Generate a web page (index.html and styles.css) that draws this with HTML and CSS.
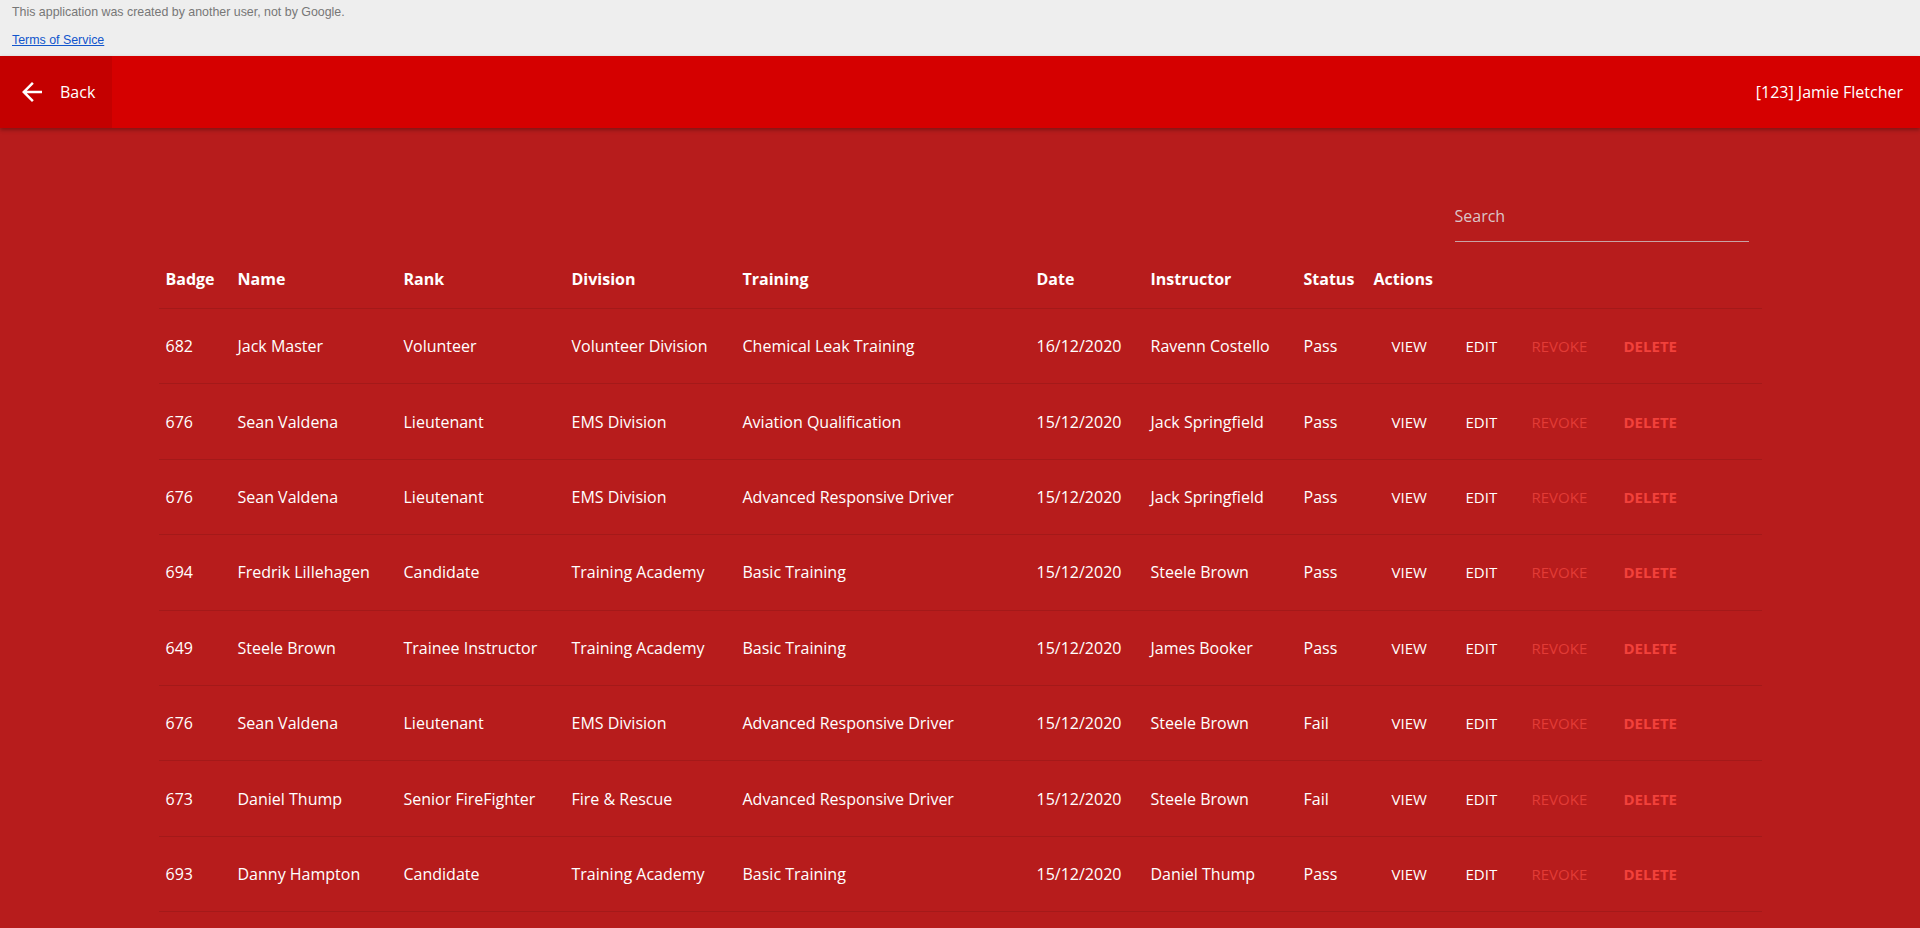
FILE: index.html
```html
<!DOCTYPE html>
<html lang="en">
<head>
<meta charset="utf-8">
<title>Training Records</title>
<link rel="stylesheet" href="styles.css">
</head>
<body>
<div class="gbar">
  <div class="gbar-line">This application was created by another user, not by Google.</div>
  <div class="gbar-line"><a class="gbar-link" href="#">Terms of Service</a></div>
</div>
<header class="toolbar">
  <a class="back" href="#">
    <svg class="back-icon" viewBox="0 0 24 24" width="30" height="30"><path fill="#fff" d="M20 11H7.83l5.590-5.59L12 4l-8 8 8 8 1.41-1.41L7.83 13H20v-2z"/></svg>
    <span class="back-text">Back</span>
  </a>
  <div class="spacer"></div>
  <div class="user">[123] Jamie Fletcher</div>
</header>
<main class="content">
  <div class="search-row">
    <label class="search-field"><input class="search-input" type="text" placeholder="Search"></label>
  </div>
  <div class="grid">
    <div class="row head">
      <div class="cell first">Badge</div><div class="cell">Name</div><div class="cell">Rank</div><div class="cell">Division</div><div class="cell">Training</div><div class="cell">Date</div><div class="cell">Instructor</div><div class="cell">Status</div><div class="cell">Actions</div>
    </div>
    <div class="row">
      <div class="cell first">682</div><div class="cell">Jack Master</div><div class="cell">Volunteer</div><div class="cell">Volunteer Division</div><div class="cell">Chemical Leak Training</div><div class="cell">16/12/2020</div><div class="cell">Ravenn Costello</div><div class="cell">Pass</div>
      <div class="cell actions"><span class="act act-view">VIEW</span><span class="act act-edit">EDIT</span><span class="act act-revoke">REVOKE</span><span class="act act-delete">DELETE</span></div>
    </div>
    <div class="row">
      <div class="cell first">676</div><div class="cell">Sean Valdena</div><div class="cell">Lieutenant</div><div class="cell">EMS Division</div><div class="cell">Aviation Qualification</div><div class="cell">15/12/2020</div><div class="cell">Jack Springfield</div><div class="cell">Pass</div>
      <div class="cell actions"><span class="act act-view">VIEW</span><span class="act act-edit">EDIT</span><span class="act act-revoke">REVOKE</span><span class="act act-delete">DELETE</span></div>
    </div>
    <div class="row">
      <div class="cell first">676</div><div class="cell">Sean Valdena</div><div class="cell">Lieutenant</div><div class="cell">EMS Division</div><div class="cell">Advanced Responsive Driver</div><div class="cell">15/12/2020</div><div class="cell">Jack Springfield</div><div class="cell">Pass</div>
      <div class="cell actions"><span class="act act-view">VIEW</span><span class="act act-edit">EDIT</span><span class="act act-revoke">REVOKE</span><span class="act act-delete">DELETE</span></div>
    </div>
    <div class="row">
      <div class="cell first">694</div><div class="cell">Fredrik Lillehagen</div><div class="cell">Candidate</div><div class="cell">Training Academy</div><div class="cell">Basic Training</div><div class="cell">15/12/2020</div><div class="cell">Steele Brown</div><div class="cell">Pass</div>
      <div class="cell actions"><span class="act act-view">VIEW</span><span class="act act-edit">EDIT</span><span class="act act-revoke">REVOKE</span><span class="act act-delete">DELETE</span></div>
    </div>
    <div class="row">
      <div class="cell first">649</div><div class="cell">Steele Brown</div><div class="cell">Trainee Instructor</div><div class="cell">Training Academy</div><div class="cell">Basic Training</div><div class="cell">15/12/2020</div><div class="cell">James Booker</div><div class="cell">Pass</div>
      <div class="cell actions"><span class="act act-view">VIEW</span><span class="act act-edit">EDIT</span><span class="act act-revoke">REVOKE</span><span class="act act-delete">DELETE</span></div>
    </div>
    <div class="row">
      <div class="cell first">676</div><div class="cell">Sean Valdena</div><div class="cell">Lieutenant</div><div class="cell">EMS Division</div><div class="cell">Advanced Responsive Driver</div><div class="cell">15/12/2020</div><div class="cell">Steele Brown</div><div class="cell">Fail</div>
      <div class="cell actions"><span class="act act-view">VIEW</span><span class="act act-edit">EDIT</span><span class="act act-revoke">REVOKE</span><span class="act act-delete">DELETE</span></div>
    </div>
    <div class="row">
      <div class="cell first">673</div><div class="cell">Daniel Thump</div><div class="cell">Senior FireFighter</div><div class="cell">Fire &amp; Rescue</div><div class="cell">Advanced Responsive Driver</div><div class="cell">15/12/2020</div><div class="cell">Steele Brown</div><div class="cell">Fail</div>
      <div class="cell actions"><span class="act act-view">VIEW</span><span class="act act-edit">EDIT</span><span class="act act-revoke">REVOKE</span><span class="act act-delete">DELETE</span></div>
    </div>
    <div class="row">
      <div class="cell first">693</div><div class="cell">Danny Hampton</div><div class="cell">Candidate</div><div class="cell">Training Academy</div><div class="cell">Basic Training</div><div class="cell">15/12/2020</div><div class="cell">Daniel Thump</div><div class="cell">Pass</div>
      <div class="cell actions"><span class="act act-view">VIEW</span><span class="act act-edit">EDIT</span><span class="act act-revoke">REVOKE</span><span class="act act-delete">DELETE</span></div>
    </div>
  </div>
</main>
</body>
</html>
```
FILE: styles.css
```css
html, body {
  margin: 0;
  padding: 0;
  height: 100%;
  overflow: hidden;
}
body {
  background: #b71c1c;
  font-family: "Open Sans", "Noto Sans", sans-serif;
  color: #fff;
}
.gbar {
  background: #eeeeee;
  height: 56px;
  box-sizing: border-box;
  padding: 5px 12px 0;
  font-family: "Liberation Sans", Arial, sans-serif;
  font-size: 12.4px;
  line-height: 15px;
  color: #777;
}
.gbar-line + .gbar-line {
  margin-top: 13px;
}
.gbar-link {
  color: #1155cc;
  text-decoration: underline;
}
.toolbar {
  height: 72px;
  background: #d50000;
  display: flex;
  align-items: stretch;
  box-shadow: 0 2px 4px rgba(0, 0, 0, 0.3);
  position: relative;
}
.back {
  width: 112px;
  background: #c40000;
  display: flex;
  align-items: center;
  padding-left: 17px;
  box-sizing: border-box;
  color: #fff;
  text-decoration: none;
  font-size: 16px;
}
.back-icon {
  display: block;
  margin-right: 13px;
}
.spacer {
  flex: 1;
}
.user {
  display: flex;
  align-items: center;
  padding-right: 17px;
  font-size: 16px;
}
.content {
  width: 1603px;
  margin: 0 auto;
  padding-top: 62px;
}
.search-row {
  display: flex;
  justify-content: flex-end;
  padding-right: 13px;
}
.search-field {
  width: 294px;
  height: 52px;
  border-bottom: 1px solid #c9a3a5;
  box-sizing: border-box;
  display: flex;
  align-items: center;
}
.search-input {
  width: 100%;
  background: transparent;
  border: none;
  outline: none;
  padding: 0;
  margin: 0;
  font-family: inherit;
  font-size: 16px;
  color: #fff;
  height: 51px;
}
.search-input::placeholder {
  color: #dcc5c7;
  opacity: 1;
}
.grid {
  margin-top: 7px;
}
.row {
  display: grid;
  grid-template-columns: 79px 166px 168px 171px 294px 114px 153px 70px 388px;
  align-items: center;
  height: 75.4px;
  box-sizing: border-box;
  border-bottom: 1px solid rgba(0, 0, 0, 0.1);
  font-size: 16px;
}
.row.head {
  height: 60px;
  font-weight: 700;
}
.cell {
  white-space: nowrap;
}
.cell.first {
  padding-left: 7px;
}
.actions {
  display: flex;
  padding-left: 18px;
  font-size: 15px;
}
.act {
  display: inline-block;
}
.act-view {
  width: 74px;
}
.act-edit {
  width: 66px;
}
.act-revoke {
  width: 92px;
  color: #e23b36;
}
.act-delete {
  color: #f2413b;
  font-weight: 700;
}
```
